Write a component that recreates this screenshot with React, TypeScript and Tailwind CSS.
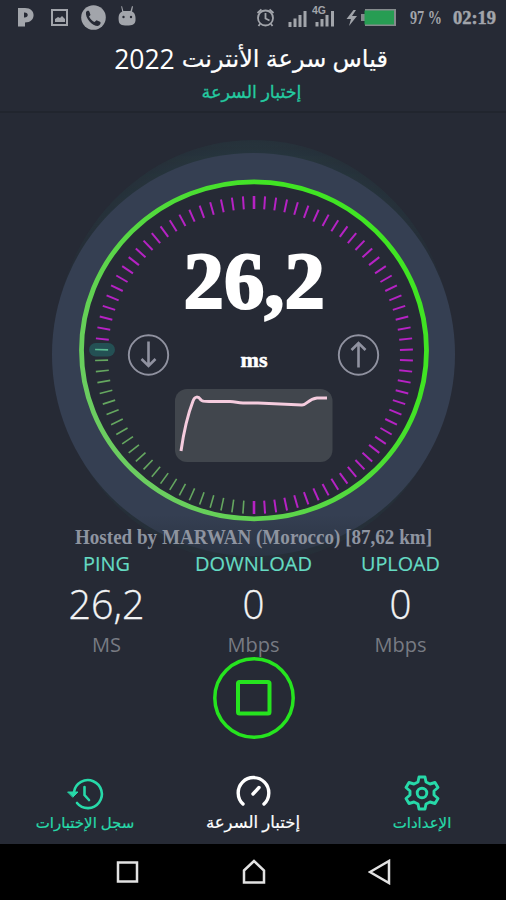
import React from "react";

const TICKS = Array.from({ length: 90 }, (_, i) => i * 4);

function StatusBar() {
  return (
    <div className="flex h-9 items-center text-[#a2a5ab]">
      <svg width="506" height="36" viewBox="0 0 506 36" className="block" fill="currentColor">
        <path fillRule="evenodd" d="M18 8h7c11.500 0 11.500 14.500 0 14.500v4h-7zM24 12.500v5c5 .5 5-5.500 0-5z" />
        <path fillRule="evenodd" d="M51 9h17v17H51zM53 11v13h13V11z" />
        <path d="M55 22v-3l3-2 2 1 2-2 3 3v3z" />
        <circle cx="93.500" cy="17.500" r="12.300" />
        <path fill="#262a35" d="M86 12c1.500-2 3-1.500 3.500 0l1 3-1.500 1.500c1.500 3 3.500 4.500 5.500 5.500l2-1.700 3.500 1.500c1.500 1 0 3.500-2 4.200-6 0-13-8-12-14z" />
        <path d="M122 6l1.300 5h7.200l1.500-5 1 .5-1 5c3.500 1.500 3.800 6 3.500 9-.4 4-3 5-8.500 5s-8-1-8.300-5c-.3-4 0-7.500 3.500-9l-1-5z" />
        <circle cx="123.500" cy="17" r="1.200" fill="#262a35" />
        <circle cx="131" cy="17" r="1.200" fill="#262a35" />
        <g fill="none" stroke="currentColor" strokeWidth="1.800">
          <circle cx="265.500" cy="18" r="7.500" />
          <path d="M265.500 13v5.500l4 2M257.500 13l4-3.500M273.500 13l-4-3.500M260 24l-1.500 2M271 24l1.500 2" />
        </g>
        <path d="M288.500 22h3v5h-3zM293.500 18.500h3V27h-3zM298.500 15h3v12h-3zM303.500 11h3v16h-3zM315.500 22h3v4.500h-3zM320.500 19h3v7.500h-3zM325.500 15h3v11.500h-3zM331 11h3v15.500h-3z" />
        <text x="312" y="14" fontSize="10.500" className="font-['Liberation_Sans'] font-bold" textLength="14">4G</text>
        <path d="M353.500 10l-7 9h4.500l-2 7 8-10h-5l4-6z" />
        <path d="M361 14h4V9h31v17h-31v-5h-4z" fill="#858b8d" />
        <path fill="#279d53" d="M364.500 10.500H394v14h-29.500z" />
        <text x="410" y="24" fontSize="18" textLength="32" lengthAdjust="spacingAndGlyphs" className="font-['Liberation_Serif'] font-bold">97 %</text>
        <text x="453" y="24" fontSize="18.500" textLength="43" lengthAdjust="spacingAndGlyphs" stroke="currentColor" strokeWidth=".5" className="font-['Liberation_Serif'] font-bold">02:19</text>
      </svg>
    </div>
  );
}

function Gauge() {
  return (
    <svg width="506" height="448" viewBox="0 113 506 448" className="mb-[-36px] block shrink-0 overflow-visible">
      <defs>
        <linearGradient id="ring" x1=".75" y1=".3" x2=".1" y2=".75">
          <stop offset="0" stopColor="#40e423" />
          <stop offset="1" stopColor="#6bcd60" />
        </linearGradient>
        <radialGradient id="glow">
          <stop offset=".93" stopColor="#27363e" />
          <stop offset="1" stopColor="#26313a" />
        </radialGradient>
        <linearGradient id="halo" gradientUnits="userSpaceOnUse" x1="0" y1="515" x2="0" y2="558">
          <stop offset="0" stopColor="#353f52" />
          <stop offset="1" stopColor="#2a3342" />
        </linearGradient>
        <linearGradient id="fade" gradientUnits="userSpaceOnUse" x1="0" y1="140" x2="0" y2="563">
          <stop offset="0" stopColor="#fff" />
          <stop offset=".18" stopColor="#fff" stopOpacity=".9" />
          <stop offset=".38" stopColor="#fff" stopOpacity=".1" />
          <stop offset=".65" stopColor="#fff" stopOpacity=".1" />
          <stop offset=".85" stopColor="#fff" stopOpacity=".8" />
          <stop offset="1" stopColor="#fff" stopOpacity=".55" />
        </linearGradient>
        <mask id="glowMask"><path d="M0 130h506v440H0z" fill="url(#fade)" /></mask>
      </defs>
      <ellipse cx="253.500" cy="351.500" rx="200" ry="211.500" fill="url(#glow)" mask="url(#glowMask)" />
      <circle cx="253.500" cy="354.500" r="201.500" fill="url(#halo)" />
      <ellipse cx="254" cy="350.300" rx="172.500" ry="168.500" fill="#262a35" stroke="url(#ring)" strokeWidth="4.800" />
      <rect x="89" y="343" width="26" height="13.500" rx="6.700" fill="#245054" />
      {TICKS.map((a) => (
        <line key={a} x1="254" x2="254" y1="196" y2="209" transform={`rotate(${a} 254 355)`} stroke={a > 180 && a <= 272 ? (a === 272 ? "#59ba91" : "#65a760") : "#b622c4"} strokeWidth={a % 180 === 0 ? 2.6 : a > 180 && a <= 272 ? 1.6 : 2} />
      ))}
      <text x="183.500" y="308" fontSize="81" textLength="141.500" lengthAdjust="spacingAndGlyphs" fill="#fff" stroke="#fff" strokeWidth="2.200" className="font-['Liberation_Serif'] font-bold">26,2</text>
      <text x="240.500" y="366.500" fontSize="21" textLength="27" lengthAdjust="spacingAndGlyphs" fill="#fff" stroke="#fff" strokeWidth=".5" className="font-['Liberation_Serif'] font-bold">ms</text>
      <g fill="none" stroke="#9092a0" strokeWidth="1.900">
        <circle cx="148.500" cy="355" r="19.700" />
        <circle cx="358.500" cy="355" r="19.700" />
        <path strokeWidth="2.600" d="M148.500 341.500v24M141.500 359l7 7 7-7M358.500 367.500v-24M351.500 350l7-7 7 7" />
      </g>
      <rect x="175" y="389" width="157.500" height="73" rx="12" fill="#41464d" />
      <path d="M181 451C183 437 188 414 193 401C195 396 198 396 201 400C202 401.500 205 401.500 209 401.500H230C236 401.500 237 403 243 403H258L302 405C307 405 308 399 317 398H327" fill="none" stroke="#f5ccde" strokeWidth="3" />
    </svg>
  );
}

interface StatProps {
  label: string;
  value: string;
  unit: string;
  width: number;
  valueWidth: number;
  unitWidth: number;
}

function Stat({ label, value, unit, width, valueWidth, unitWidth }: StatProps) {
  return (
    <div className="flex w-[147px] flex-col items-center">
      <svg width="147" height="108" viewBox="0 0 147 108" textAnchor="middle" className="block overflow-visible font-['Open_Sans','Noto_Sans',sans-serif]">
        <text x="73.500" y="19.500" fontSize="20.500" fill="#65dbc3" stroke="#65dbc3" strokeWidth=".2" textLength={width} lengthAdjust="spacingAndGlyphs">{label}</text>
        <text x="73.500" y="68" fontSize="41" fill="#f2f3f4" stroke="#f2f3f4" strokeWidth=".3" textLength={valueWidth} lengthAdjust="spacingAndGlyphs" className="font-light">{value}</text>
        <text x="73.500" y="101" fontSize="20.500" fill="#787b83" textLength={unitWidth} lengthAdjust="spacingAndGlyphs">{unit}</text>
      </svg>
    </div>
  );
}

export default function App() {
  return (
    <div className="flex h-[900px] w-[506px] flex-col overflow-hidden bg-[#262a35] font-['Noto_Sans','DejaVu_Sans',sans-serif]">
      <header className="h-[113px] shrink-0 border-b-2 border-[#21252e]">
        <StatusBar />
        <h1 dir="rtl" className="flex h-[44px] items-center justify-center gap-[7px] pr-[4px] whitespace-nowrap text-white">
          <span className="text-[24px] leading-[44px] [-webkit-text-stroke:0.2px_white]">قياس سرعة الأنترنت</span>
          <span className="pt-[2px] font-['Open_Sans'] text-[26.5px] leading-[42px]">2022</span>
        </h1>
        <p dir="rtl" className="pr-[3px] text-center text-[17.5px] leading-[22px] text-[#24caa0] [-webkit-text-stroke:0.3px_#24caa0]">إختبار السرعة</p>
      </header>

      <Gauge />

      <p className="relative flex h-[26px] shrink-0 items-center justify-center">
        <svg width="506" height="26" className="block">
          <text x="75" y="18.500" fontSize="20.500" textLength="357" lengthAdjust="spacingAndGlyphs" fill="#8e94a0" className="font-['Liberation_Serif'] font-bold">Hosted by MARWAN (Morocco) [87,62 km]</text>
        </svg>
      </p>
      <section className="relative flex h-[108px] shrink-0 justify-center">
        <Stat label="PING" value="26,2" unit="MS" width={47} valueWidth={76} unitWidth={29} />
        <Stat label="DOWNLOAD" value="0" unit="Mbps" width={117} valueWidth={22} unitWidth={52} />
        <Stat label="UPLOAD" value="0" unit="Mbps" width={79} valueWidth={22} unitWidth={52} />
      </section>
      <div className="flex h-[82px] shrink-0 justify-center pl-[2px]">
        <svg width="82" height="82" fill="none" stroke="#26e41f" className="overflow-visible">
          <circle cx="41" cy="39" r="39.200" strokeWidth="3.500" />
          <rect x="25" y="23" width="31.500" height="31.500" rx="1.500" strokeWidth="4" />
        </svg>
      </div>

      <nav className="flex h-[103px] shrink-0 px-[1px] pt-[34px] text-[#27d9a9]">
        <div className="flex w-[168px] flex-col items-center">
          <svg width="36" height="36" viewBox="0 0 36 36" fill="none" stroke="currentColor" strokeWidth="2.600" strokeLinecap="round" className="overflow-visible">
            <path d="M7 17A14 14 0 1 1 10 28M17.500 12v8l4.500 5" />
            <path d="M1 17h10L6 22z" fill="currentColor" strokeWidth="1" />
          </svg>
          <span dir="rtl" className="pt-[1px] text-[15px] leading-[20px] whitespace-nowrap [-webkit-text-stroke:0.2px_#27d9a9]">سجل الإختبارات</span>
        </div>
        <div className="flex w-[168px] flex-col items-center text-white">
          <svg width="36" height="36" viewBox="0 0 36 36" fill="none" stroke="currentColor" strokeWidth="3.400" strokeLinecap="round">
            <path d="M8 29A15.300 15.300 0 1 1 29 29M18 19l6-6.500" />
          </svg>
          <span dir="rtl" className="pt-[1px] text-[16.5px] leading-[20px] whitespace-nowrap [-webkit-text-stroke:0.2px_white]">إختبار السرعة</span>
        </div>
        <div className="flex w-[168px] flex-col items-center pl-[2px]">
          <svg width="36" height="36" viewBox="0 0 36 36" fill="none" stroke="currentColor" strokeWidth="2.900" strokeLinejoin="round">
            <path d="M15 2h6l1 5 4 2 5-1.500 3 5-4 3.500v4l4 3.500-3 5-5-1.500-4 2-1 5h-6l-1-5-4-2-5 1.500-3-5L6 20v-4l-4-3.500 3-5L10 9l4-2z" />
            <circle cx="18" cy="18" r="4.800" />
          </svg>
          <span dir="rtl" className="pt-[1px] text-[15px] leading-[20px] whitespace-nowrap [-webkit-text-stroke:0.2px_#27d9a9]">الإعدادات</span>
        </div>
      </nav>
      <footer className="flex h-[56px] shrink-0 items-center justify-center gap-[102px] bg-black pl-[1px]">
        <svg width="24" height="26" fill="none" stroke="#e2e2e2" strokeWidth="2.500"><path d="M2 3.500h19v19H2z" /></svg>
        <svg width="24" height="26" fill="none" stroke="#e2e2e2" strokeWidth="2.500"><path d="M2 11.500L12 2l10 9.500v12H2z" /></svg>
        <svg width="24" height="26" fill="none" stroke="#e2e2e2" strokeWidth="2.500"><path d="M2 13L21 2v22z" /></svg>
      </footer>
    </div>
  );
}
